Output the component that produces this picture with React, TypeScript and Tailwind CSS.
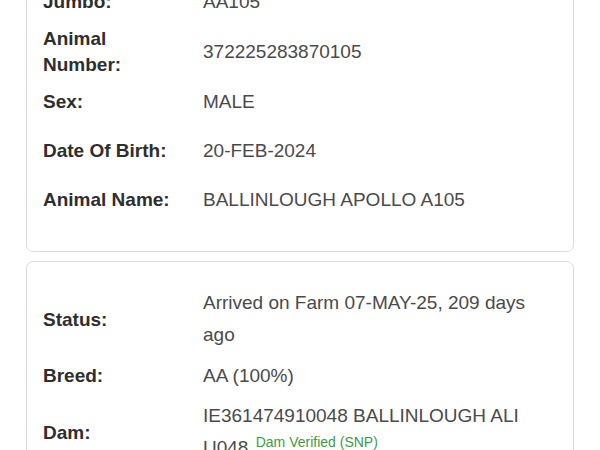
import React from "react";

type Row = { label: string; value: React.ReactNode };

const card1: Row[] = [
  { label: "Jumbo:", value: "AA105" },
  { label: "Animal Number:", value: "372225283870105" },
  { label: "Sex:", value: "MALE" },
  { label: "Date Of Birth:", value: "20-FEB-2024" },
  { label: "Animal Name:", value: "BALLINLOUGH APOLLO A105" },
];

const card2: Row[] = [
  { label: "Status:", value: "Arrived on Farm 07-MAY-25, 209 days ago" },
  { label: "Breed:", value: "AA (100%)" },
  {
    label: "Dam:",
    value: (
      <>
        IE361474910048 BALLINLOUGH ALI U048{" "}
        <span className="align-super text-[14px] leading-none text-[#3f9a3f] ml-[2px]">
          Dam Verified (SNP)
        </span>
      </>
    ),
  },
  { label: "Sire:", value: "" },
];

function Rows({ rows }: { rows: Row[] }) {
  return (
    <div className="flex flex-col">
      {rows.map((r, i) => (
        <div key={i} className="grid grid-cols-[160px_1fr] items-center min-h-[49px]">
          <div className="pr-[15px] text-[19px] leading-[25.7px] font-bold text-[#2e2e2e]">
            {r.label}
          </div>
          <div className="text-[19px] leading-[32px] text-[#4a4a4a]">{r.value}</div>
        </div>
      ))}
    </div>
  );
}

export default function App() {
  return (
    <div className="w-[600px] h-[450px] overflow-hidden bg-white font-['Liberation_Sans',Arial,sans-serif]">
      <div className="mt-[-49px] px-[26px] flex flex-col gap-[9px]">
        <div className="border border-[#dcdcdc] rounded-[7px] bg-white px-4 pt-[25px] pb-[27px]">
          <Rows rows={card1} />
        </div>
        <div className="border border-[#dcdcdc] rounded-[7px] bg-white px-4 pt-[25px] pb-[27px]">
          <Rows rows={card2} />
        </div>
      </div>
    </div>
  );
}
